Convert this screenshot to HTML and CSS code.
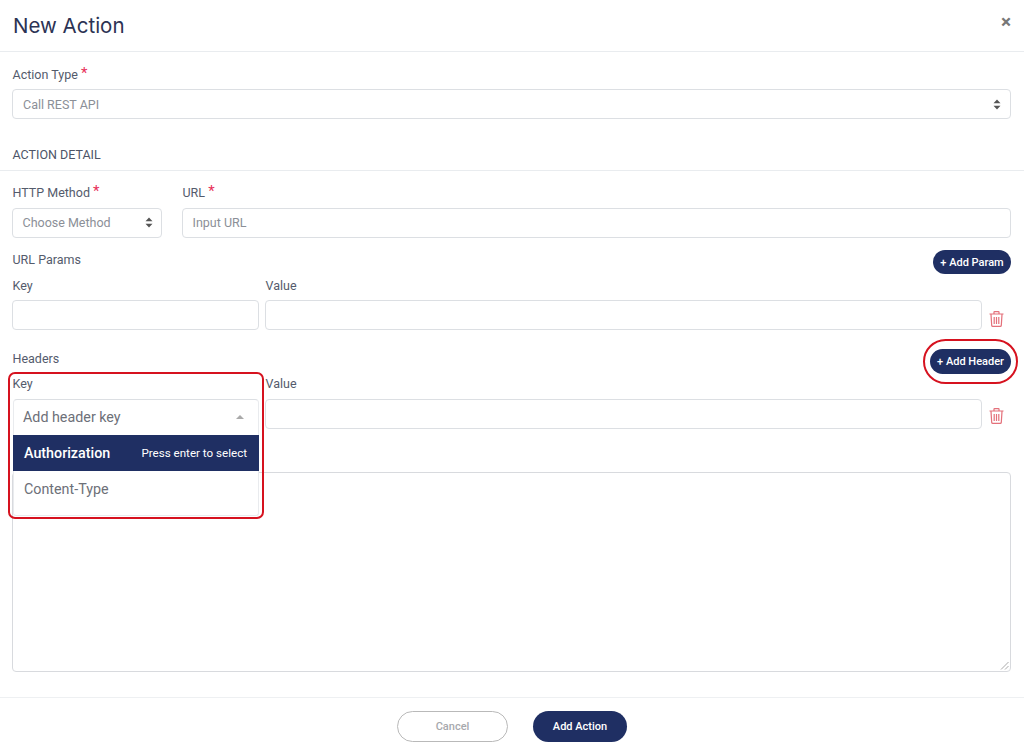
FILE: index.html
```html
<!DOCTYPE html>
<html lang="en">
<head>
<meta charset="utf-8">
<title>New Action</title>
<link rel="stylesheet" href="styles.css">
</head>
<body>
<div class="modal">
  <header class="modal-head">
    <h1 class="title">New Action</h1>
    <span class="close">×</span>
  </header>
  <section class="type-block">
    <div class="label">Action Type <span class="req">*</span></div>
    <div class="field select">Call REST API
      <svg class="updown" width="8" height="11" viewBox="0 0 8 11"><path d="M4 0.5 7.5 4.3H.5zM4 10.5.5 6.7h7z"/></svg>
    </div>
  </section>
  <div class="section-title">ACTION DETAIL</div>
  <section class="detail">
    <div class="method-row">
      <div class="method">
        <div class="label">HTTP Method <span class="req">*</span></div>
        <div class="field select">Choose Method
          <svg class="updown" width="8" height="11" viewBox="0 0 8 11"><path d="M4 0.5 7.5 4.3H.5zM4 10.5.5 6.7h7z"/></svg>
        </div>
      </div>
      <div class="url">
        <div class="label">URL <span class="req">*</span></div>
        <div class="field">Input URL</div>
      </div>
    </div>

    <div class="list-head params-head">
      <div class="label">URL Params</div>
      <button class="pill">+ Add Param</button>
    </div>
    <div class="kv-labels"><div class="label">Key</div><div class="label">Value</div></div>
    <div class="kv-row">
      <div class="field"></div>
      <div class="field"></div>
      <svg class="trash trash-first" width="15" height="16" viewBox="0 0 15 16" fill="none" stroke="#e4707a" stroke-width="1.2"><path d="M.5 3h14M5 2.8V1.1Q5 .6 5.6 .6h3.8Q10 .6 10 1.1v1.7M2 3.4l.7 11q.1 1 1.1 1h7.4q1 0 1.1-1l.7-11M5.2 6v7M7.5 6v7M9.8 6v7"/></svg>
    </div>

    <div class="list-head headers-head">
      <div class="label">Headers</div>
      <div class="annot-wrap">
        <button class="pill">+ Add Header</button>
        <span class="ring"></span>
      </div>
    </div>
    <div class="kv-labels kv-labels-tight"><div class="label">Key</div><div class="label">Value</div></div>
    <div class="kv-row">
      <div class="combo-anchor">
        <div class="combo">
          <div class="combo-input">Add header key
            <svg class="caret" width="8" height="4" viewBox="0 0 8 4"><path d="M4 0 8 4H0z"/></svg>
          </div>
          <div class="option active"><span>Authorization</span><small>Press enter to select</small></div>
          <div class="option">Content-Type</div>
        </div>
        <span class="red-box"></span>
      </div>
      <div class="field"></div>
      <svg class="trash trash-second" width="15" height="16" viewBox="0 0 15 16" fill="none" stroke="#e4707a" stroke-width="1.2"><path d="M.5 3h14M5 2.8V1.1Q5 .6 5.6 .6h3.8Q10 .6 10 1.1v1.7M2 3.4l.7 11q.1 1 1.1 1h7.4q1 0 1.1-1l.7-11M5.2 6v7M7.5 6v7M9.8 6v7"/></svg>
    </div>

    <div class="body-box">
      <svg class="grip" width="9" height="9" viewBox="0 0 9 9" stroke="#aaa" fill="none"><path d="M1 8.5 8.5 1M5 8.5 8.5 5"/></svg>
    </div>
  </section>
  <footer class="modal-foot">
    <button class="btn-cancel">Cancel</button>
    <button class="btn-add">Add Action</button>
  </footer>
</div>
</body>
</html>
```
FILE: styles.css
```css
* { box-sizing: border-box; }
html, body { margin: 0; padding: 0; }
body {
  background: #fff;
  font-family: "Roboto", "Liberation Sans", sans-serif;
  color: #4d5467;
  width: 1024px;
  height: 753px;
  overflow: hidden;
}
.modal { width: 1024px; height: 753px; display: flex; flex-direction: column; }
.modal-head {
  height: 52px;
  border-bottom: 1px solid #e9ecef;
  padding: 0 12px 0 13px;
  display: flex;
  align-items: center;
  justify-content: space-between;
  flex: none;
}
.title { margin: 0; font-family: "Inter", sans-serif; font-weight: 400; font-size: 20.5px; color: #2c3354; }
.close { font-size: 19px; font-weight: 700; color: #777; line-height: 1; margin-top: -8px; margin-right: 1px; }
.label { font-size: 12.5px; line-height: 16px; color: #545b6c; padding-left: 0.5px; }
.req { color: #e8305a; font-size: 15px; line-height: 10px; position: relative; top: -1px; }
.field {
  height: 30px;
  border: 1px solid #dcdfe3;
  border-radius: 4px;
  padding: 0 10px 1px 9.5px;
  display: flex;
  align-items: center;
  justify-content: space-between;
  font-size: 12.5px;
  color: #8b8f97;
  background: #fff;
}
.updown { fill: #555; }
.type-block { padding: 15px 12px 0; flex: none; }
.type-block .label { margin-bottom: 6px; }
.type-block .field { width: 999px; padding: 0 9px 0 10px; }
.section-title {
  flex: none;
  margin-top: 28px;
  height: 24px;
  border-bottom: 1px solid #e9ecef;
  padding-left: 12.5px;
  font-size: 12.5px;
  line-height: 16px;
  color: #4d5467;
}
.detail { padding: 14px 13px 0 12px; flex: none; }
.method-row { display: flex; gap: 20px; }
.method { width: 150px; flex: none; }
.method .field { padding-right: 8px; }
.url { flex: 1; }
.method .label, .url .label { margin-bottom: 7px; }
.list-head { display: flex; justify-content: space-between; align-items: flex-start; }
.list-head .label { margin-top: 2px; }
.params-head { margin-top: 12px; height: 24px; }
.headers-head { margin-top: 19px; height: 25px; }
.pill {
  border: 0;
  background: #1f2f63;
  color: #fff;
  font-family: inherit;
  font-size: 11px;
  font-weight: 500;
  height: 24px;
  width: 78px;
  padding: 0;
  border-radius: 13px;
  white-space: nowrap;
  display: block;
}
.headers-head .pill { height: 25px; width: 81px; }
.annot-wrap { position: relative; }
.ring {
  position: absolute;
  left: -7px; right: -7px; top: -10px; bottom: -10px;
  border: 2px solid #d6121f;
  border-radius: 24px;
}
.kv-labels { display: grid; grid-template-columns: 247px 1fr; gap: 6px; margin-top: 4px; height: 22px; }
.kv-labels-tight { margin-top: 2px; height: 23px; }
.kv-row { display: grid; grid-template-columns: 247px 717px 16px; column-gap: 6px; align-items: center; height: 30px; }
.trash { justify-self: center; }
.trash-first { margin-top: 7px; }
.trash-second { margin-top: 4px; }
.combo-anchor { position: relative; height: 30px; }
.combo {
  position: absolute;
  left: 1px; top: 0;
  width: 246px;
  background: #fff;
  border: 1px solid #e9ebee;
  border-top-color: #dcdfe3;
  border-radius: 4px 4px 3px 3px;
  z-index: 2;
  padding-bottom: 8px;
}
.combo-input {
  height: 35px;
  padding: 0 14px 2px 9px;
  display: flex;
  align-items: center;
  justify-content: space-between;
  font-size: 14.3px;
  color: #6d7078;
}
.caret { fill: #aaa; }
.option {
  height: 36px;
  margin: 0 -1px;
  padding: 0 12px 0 11px;
  display: flex;
  align-items: center;
  justify-content: space-between;
  font-size: 14.3px;
  color: #6d7078;
}
.option.active { background: #1f2f63; color: #fff; font-weight: 500; }
.option small { font-size: 11.6px; font-weight: 400; }
.red-box {
  position: absolute;
  left: -4px; top: -27px;
  width: 256px; height: 147px;
  border: 2px solid #d6121f;
  border-radius: 7px;
  z-index: 3;
}
.body-box {
  position: relative;
  margin-top: 43px;
  height: 200px;
  border: 1px solid #d8dade;
  border-radius: 4px;
}
.grip { position: absolute; right: 1px; bottom: 1px; }
.modal-foot {
  flex: none;
  margin-top: 25px;
  border-top: 1px solid #eef0f2;
  padding-top: 13px;
  display: flex;
  justify-content: center;
  gap: 25px;
}
.btn-cancel, .btn-add {
  font-family: inherit;
  font-size: 11px;
  font-weight: 500;
  height: 31px;
  border-radius: 16px;
}
.btn-cancel { width: 111px; background: #fff; border: 1px solid #b9b9b9; color: #a7a9ad; }
.btn-add { width: 94px; background: #1f2f63; border: 0; color: #fff; }
```
